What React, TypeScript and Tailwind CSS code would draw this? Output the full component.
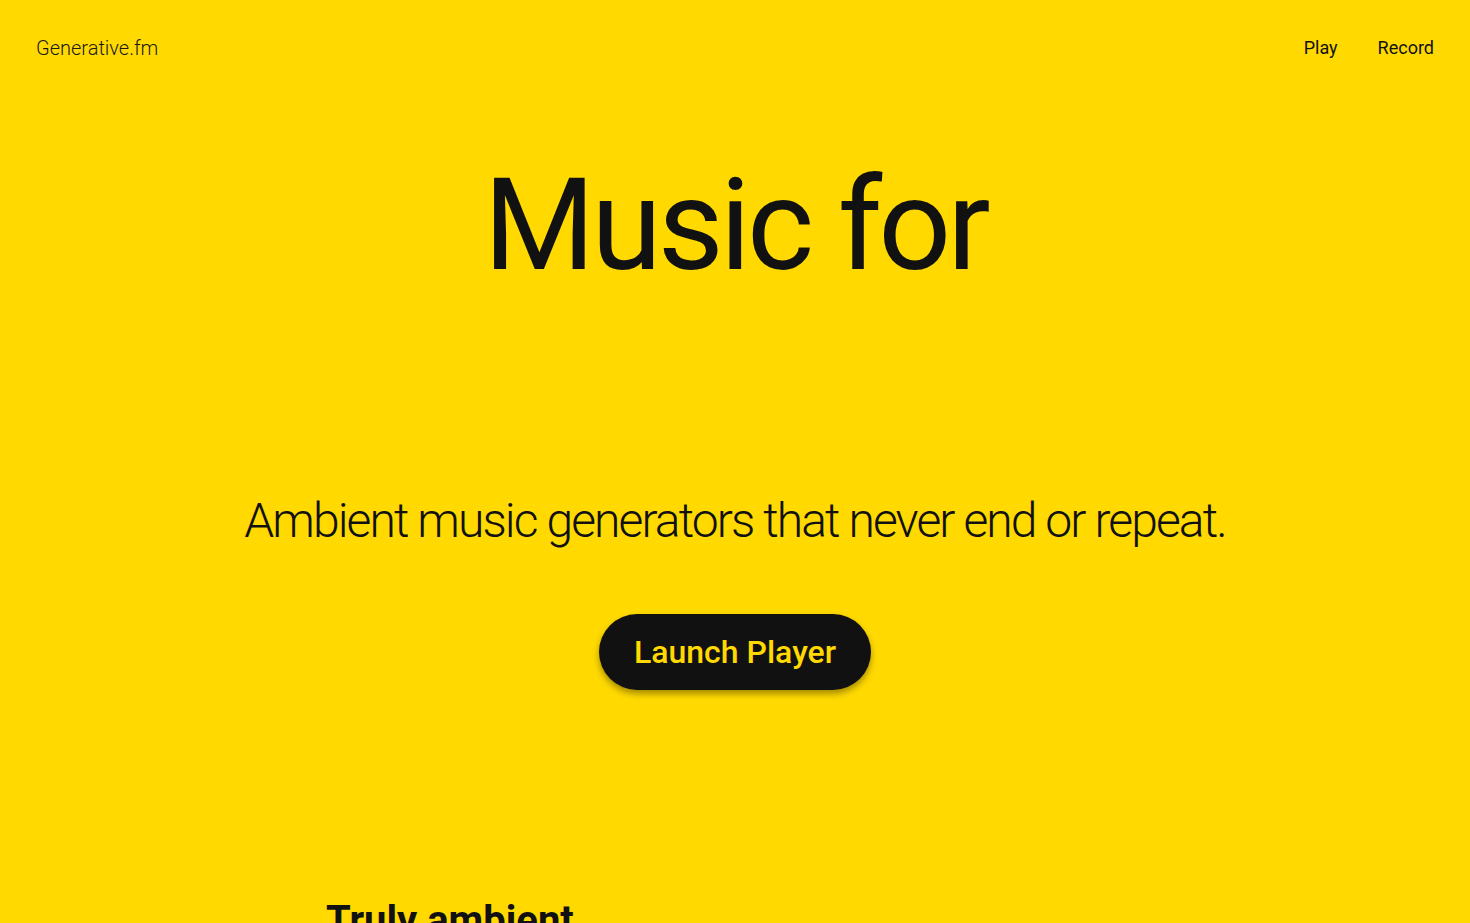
export default function App() {
  return (
    <div className="min-h-screen bg-[#ffd900] text-[#111111] font-['Roboto',sans-serif] overflow-hidden">
      <header className="flex items-center justify-between px-9 pt-[34px] leading-[28px]">
        <a className="text-[20px] font-light text-[#1a1a1a]">Generative.fm</a>
        <nav className="flex gap-10 text-[18px]">
          <a>Play</a>
          <a>Record</a>
        </nav>
      </header>
      <section className="flex flex-col items-center">
        <h1 className="mt-[99px] text-[128px] leading-none font-normal tracking-[-4px]">Music for</h1>
        <p className="mt-[208px] text-[48px] leading-none font-light tracking-[-1.9px]">
          Ambient music generators that never end or repeat.
        </p>
        <button className="mt-[69px] h-[76px] px-[35px] rounded-full bg-[#111111] text-[#ffd900] text-[32px] font-medium shadow-[0_4px_6px_rgba(0,0,0,0.35)]">
          Launch Player
        </button>
      </section>
      <div className="mx-auto w-[818px] mt-[211px]">
        <h2 className="text-[40px] leading-none font-bold">Truly ambient</h2>
      </div>
    </div>
  );
}
